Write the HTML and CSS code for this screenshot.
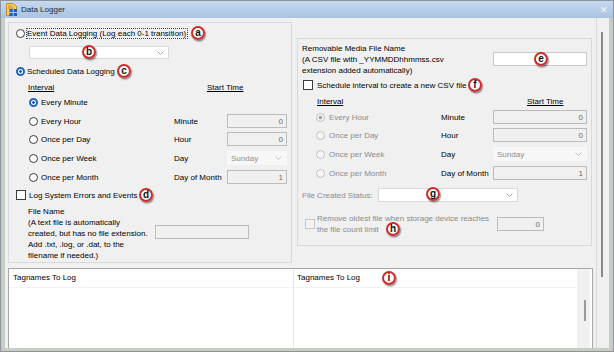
FILE: index.html
```html
<!DOCTYPE html>
<html lang="en">
<head>
    <meta charset="UTF-8">
    <title>Data Logger</title>
    <link rel="stylesheet" href="styles.css">
</head>
<body>
    <div class="window">
        <div class="titlebar">
            <svg class="app-icon" width="11" height="13" viewBox="0 0 11 13">
                <path d="M0.5 0.5h7l3 3v9h-10z" fill="#f4d068" stroke="#c8891e"/>
                <path d="M2 3h4.5M2 5h6" stroke="#c8891e"/>
                <rect x="3.5" y="6" width="7.5" height="7" fill="#1f5fb5"/>
                <path d="M3.5 9.5h7.5M7.2 6v7" stroke="#a9c9ef"/>
            </svg>
            <span>Data Logger</span>
            <span class="close">&#x2715;</span>
        </div>

        <div class="client">
            <div class="pane">
                <div class="top">
                    <!-- event / scheduled logging -->
                    <div class="group left-box">
                        <label class="opt first"><input type="radio" name="mode"><span class="focus">Event Data Logging (Log each 0-1 transition)</span></label>
                        <div class="combo event-tag"><span></span><svg width="7" height="4" viewBox="0 0 7 4"><path d="M0.5 0.5l3 3 3-3" fill="none" stroke="#a8a8a8"/></svg></div>
                        <label class="opt"><input type="radio" name="mode" checked>Scheduled Data Logging</label>
                        <div class="ihead"><u>Interval</u><u>Start Time</u></div>
                        <div class="irow"><label class="opt"><input type="radio" name="every" checked>Every Minute</label></div>
                        <div class="irow"><label class="opt"><input type="radio" name="every">Every Hour</label><span>Minute</span><input class="field" value="0" disabled></div>
                        <div class="irow"><label class="opt"><input type="radio" name="every">Once per Day</label><span>Hour</span><input class="field" value="0" disabled></div>
                        <div class="irow"><label class="opt"><input type="radio" name="every">Once per Week</label><span>Day</span><div class="combo off"><span>Sunday</span><svg width="7" height="4" viewBox="0 0 7 4"><path d="M0.5 0.5l3 3 3-3" fill="none" stroke="#c4c4c4"/></svg></div></div>
                        <div class="irow"><label class="opt"><input type="radio" name="every">Once per Month</label><span>Day of Month</span><input class="field" value="1" disabled></div>
                        <label class="opt"><input type="checkbox">Log System Errors and Events</label>
                        <div class="file-row">
                            <p>File Name<br>(A text file is automatically<br>created, but has no file extension.<br>Add .txt, .log, or .dat, to the<br>filename if needed.)</p>
                            <input class="field" disabled>
                        </div>
                    </div>

                    <!-- removable media csv -->
                    <div class="group right-box">
                        <div class="media">
                            <p>Removable Media File Name<br>(A CSV file with _YYMMDDhhmmss.csv<br>extension added automatically)</p>
                            <input class="field white">
                        </div>
                        <label class="opt"><input type="checkbox">Schedule interval to create a new CSV file</label>
                        <div class="ihead"><u>Interval</u><u>Start Time</u></div>
                        <div class="irow"><label class="opt dim"><input type="radio" name="csv" checked disabled>Every Hour</label><span>Minute</span><input class="field" value="0" disabled></div>
                        <div class="irow"><label class="opt dim"><input type="radio" name="csv" disabled>Once per Day</label><span>Hour</span><input class="field" value="0" disabled></div>
                        <div class="irow"><label class="opt dim"><input type="radio" name="csv" disabled>Once per Week</label><span>Day</span><div class="combo off"><span>Sunday</span><svg width="7" height="4" viewBox="0 0 7 4"><path d="M0.5 0.5l3 3 3-3" fill="none" stroke="#c4c4c4"/></svg></div></div>
                        <div class="irow"><label class="opt dim"><input type="radio" name="csv" disabled>Once per Month</label><span>Day of Month</span><input class="field" value="1" disabled></div>
                        <div class="status">
                            <span class="dim">File Created Status:</span>
                            <div class="combo"><span></span><svg width="7" height="4" viewBox="0 0 7 4"><path d="M0.5 0.5l3 3 3-3" fill="none" stroke="#a8a8a8"/></svg></div>
                        </div>
                        <div class="remove">
                            <input type="checkbox" disabled>
                            <span class="dim">Remove oldest file when storage device reaches<br>the file count limit</span>
                            <input class="field" value="0" disabled>
                        </div>
                    </div>
                </div>

                <div class="tags">
                    <div class="col"><div class="col-head">Tagnames To Log</div></div>
                    <div class="col"><div class="col-head">Tagnames To Log</div></div>
                    <div class="list-scroll"><div class="thumb"></div></div>
                </div>
            </div>
            <div class="vscroll"><div class="thumb"></div></div>
        </div>

        <!-- callouts -->
        <span class="badge b-a">a</span>
        <span class="badge b-b">b</span>
        <span class="badge b-c">c</span>
        <span class="badge b-d">d</span>
        <span class="badge b-e">e</span>
        <span class="badge b-f">f</span>
        <span class="badge b-g">g</span>
        <span class="badge b-h">h</span>
        <span class="badge b-i">i</span>
    </div>
</body>
</html>
```

FILE: styles.css
```css
body {
    margin: 0;
    font-family: "Liberation Sans", Arial, sans-serif;
    font-size: 8px;
    color: #000;
}

p {
    margin: 0;
}

.window {
    position: relative;
    width: 614px;
    height: 352px;
    box-sizing: border-box;
    border: 1px solid #8d949b;
    background: #c9ccc2;
    overflow: hidden;
}

.titlebar {
    height: 17px;
    display: flex;
    align-items: center;
    gap: 4px;
    padding-left: 5px;
    background: linear-gradient(#c6d9ef, #a9c3e0);
    color: #1d2733;
    font-size: 8px;
}

.close {
    margin-left: auto;
    margin-right: 5px;
    color: #f2f6fa;
    font-size: 9px;
}

.client {
    display: flex;
    height: 330px;
    margin: 0 4px;
    background: #f0f0f0;
}

.pane {
    width: 592px;
    padding: 4px 0 0 3px;
    box-sizing: border-box;
    overflow: hidden;
}

.vscroll {
    width: 12px;
    border-left: 1px solid #dadada;
}

.vscroll .thumb {
    width: 2px;
    height: 245px;
    margin: 14px 0 0 4px;
    background: #8a8a8a;
}

.top {
    display: flex;
    align-items: flex-start;
    gap: 5px;
}

.group {
    border: 1px solid #d5dadf;
    box-sizing: border-box;
}

/* rows */
.opt {
    display: flex;
    align-items: center;
    gap: 2px;
    height: 14px;
    white-space: nowrap;
}

.opt.first {
    gap: 1px;
}

.focus {
    border: 1px dotted #444;
    padding: 0 1px 0 0;
    line-height: 9px;
}

.dim {
    color: #8b8b8b;
}

input[type="radio"] {
    appearance: none;
    margin: 0;
    width: 9px;
    height: 9px;
    border: 1px solid #3c3c3c;
    border-radius: 50%;
    background: #fff;
    box-sizing: border-box;
}

input[type="radio"]:checked {
    border: 2px solid #1f65c0;
    background: radial-gradient(circle, #1c57a5 0 1px, #fff 1.6px);
}

input[type="radio"]:disabled {
    border: 1px solid #c2c2c2;
    background: #f4f4f4;
}

input[type="radio"]:disabled:checked {
    background: radial-gradient(circle, #a8a8a8 0 1.6px, #f4f4f4 2.2px);
}

input[type="checkbox"] {
    appearance: none;
    margin: 0 1px 0 0;
    width: 10px;
    height: 10px;
    border: 1px solid #3c3c3c;
    background: #fff;
    box-sizing: border-box;
}

input[type="checkbox"]:disabled {
    border-color: #c6c6c6;
    background: #f4f4f4;
}

.field {
    width: 100%;
    height: 14px;
    box-sizing: border-box;
    margin: 0;
    padding: 0 3px;
    border: 1px solid #bcbcbc;
    background: #f0f0f0;
    color: #6b6b6b;
    font: inherit;
    text-align: right;
}

.field.white {
    background: #fff;
    border-color: #c8c8c8;
}

.combo {
    display: flex;
    align-items: center;
    justify-content: space-between;
    height: 14px;
    box-sizing: border-box;
    padding: 0 4px 0 3px;
    border: 1px solid #d9d9d9;
    background: #fff;
}

.combo.off {
    border-color: #f7f7f7;
    background: #f7f7f7;
    color: #8d8d8d;
}

.ihead {
    display: grid;
    align-items: center;
    height: 14px;
}

.irow {
    display: grid;
    align-items: center;
    height: 14px;
}

.irow .opt input {
    margin-right: 1px;
}

/* left group */
.left-box {
    width: 284px;
    height: 241px;
    padding: 3px 0 0 7px;
    display: grid;
    grid-template-rows: 20px 18px 16px 15px 19px 18px 19px 19px 18px 18px auto;
    align-items: start;
}

.left-box .event-tag {
    width: 140px;
    height: 13px;
    margin-left: 13px;
}

.left-box .ihead {
    grid-template-columns: 179px auto;
    padding-left: 12px;
}

.left-box .irow {
    grid-template-columns: 158px 53px 60px;
}

.left-box .irow .opt {
    padding-left: 13px;
}

.file-row {
    display: grid;
    grid-template-columns: 127px 94px;
    padding-left: 12px;
    line-height: 11px;
    white-space: nowrap;
}

.file-row .field {
    margin-top: 19px;
}

/* right group */
.right-box {
    width: 295px;
    height: 208px;
    margin-top: 16px;
    padding: 4px 3px 0 4px;
    display: grid;
    grid-template-rows: 35px 16px 16px 18px 19px 19px 22px 25px auto;
    align-items: start;
}

.media {
    display: grid;
    grid-template-columns: 191px 94px;
    line-height: 11px;
    white-space: nowrap;
}

.media .field {
    margin-top: 9px;
}

.right-box > .opt {
    padding-left: 1px;
    gap: 3px;
}

.right-box .ihead {
    grid-template-columns: 210px auto;
    padding-left: 15px;
}

.right-box .irow {
    grid-template-columns: 139px 52px 94px;
}

.right-box .irow .opt {
    padding-left: 14px;
    gap: 3px;
}

.status {
    display: grid;
    grid-template-columns: 76px 140px;
    align-items: center;
}

.remove {
    display: grid;
    grid-template-columns: 12px 180px 47px;
    align-items: start;
    padding-left: 3px;
    line-height: 11px;
    white-space: nowrap;
}

.remove input[type="checkbox"] {
    margin-top: 6px;
}

.remove .field {
    margin-top: 4px;
}

/* tag lists */
.tags {
    display: grid;
    grid-template-columns: 285px 283px 13px;
    width: 583px;
    height: 80px;
    margin-top: 5px;
    border: 1px solid #a6a6a6;
    background: #fff;
}

.col {
    border-right: 1px solid #e6e6e6;
}

.col:nth-child(2) {
    border-right: none;
}

.col-head {
    height: 18px;
    line-height: 18px;
    padding-left: 4px;
    border-bottom: 1px solid #f2f2f2;
}

.col:nth-child(2) .col-head {
    padding-left: 3px;
}

.list-scroll {
    background: #f0f0f0;
}

.list-scroll .thumb {
    width: 2px;
    height: 21px;
    margin: 31px 0 0 7px;
    background: #9a9a9a;
}

/* red callout markers */
.badge {
    position: absolute;
    width: 14px;
    height: 14px;
    box-sizing: border-box;
    border: 2px solid #d02a2a;
    border-radius: 50%;
    background: radial-gradient(circle at 45% 40%, #fff 45%, #e2e2e2);
    box-shadow: 1px 1.5px 1.5px rgba(0, 0, 0, 0.45);
    font-size: 10px;
    font-weight: bold;
    line-height: 10px;
    text-align: center;
    color: #111;
}

.b-a { left: 190px; top: 25px; }
.b-b { left: 81px; top: 44px; }
.b-c { left: 116px; top: 63px; }
.b-d { left: 138px; top: 187px; }
.b-e { left: 533px; top: 51px; }
.b-f { left: 467px; top: 77px; }
.b-g { left: 425px; top: 186px; }
.b-h { left: 385px; top: 221px; }
.b-i { left: 381px; top: 270px; }
```
